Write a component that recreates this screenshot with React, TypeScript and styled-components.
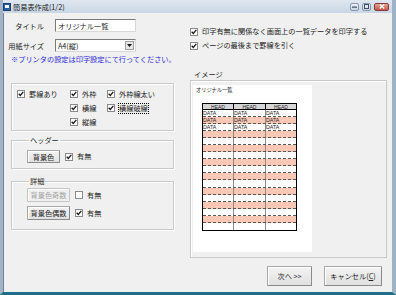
import React from 'react';
import styled, { createGlobalStyle } from 'styled-components';

const Global = createGlobalStyle`
  html, body { margin: 0; padding: 0; background: #f0f0f0; }
  body {
    width: 396px; height: 295px; overflow: hidden;
    font-family: "Noto Sans CJK JP", "Noto Sans", sans-serif;
    font-size: 7.2px; color: #1c1c1c;
  }
  * { box-sizing: border-box; }
`;

const Window = styled.div`
  width: 396px;
  height: 295px;
  display: flex;
  flex-direction: column;
  background: #f0f0f0;
  border-left: 3px solid #a4b4c6;
  border-right: 4px solid #9fb3c6;
  border-bottom: 3px solid #1f6f8b;
  box-shadow: inset 1px 0 0 #6f8297;
`;

const TitleBar = styled.div`
  height: 13px;
  display: flex;
  align-items: center;
  padding: 0 3px 0 0;
  background: linear-gradient(#dfe7f0, #c9d6e4);
`;

const AppIcon = styled.span`
  width: 8px; height: 8px;
  margin-right: 2px;
  background: #2a5fa8;
  border: 1px solid #1b3f74;
  display: flex; align-items: center; justify-content: center;
  &::after { content: ""; width: 4px; height: 3px; background: #fff; }
`;

const TitleText = styled.span`
  flex: 1;
  font-size: 7.2px;
  color: #222;
  white-space: nowrap;
`;

const Controls = styled.div`
  display: flex;
  gap: 3px;
  align-items: center;
`;

const CtlButton = styled.span<{ $close?: boolean }>`
  width: ${p => (p.$close ? 15 : 9)}px;
  height: 8px;
  border-radius: 2px;
  border: 1px solid ${p => (p.$close ? '#8a3a3a' : '#8497ad')};
  background: ${p => (p.$close ? 'linear-gradient(#e6a296, #c7564a)' : 'linear-gradient(#f0f4f8, #c9d5e2)')};
  display: flex; align-items: center; justify-content: center;
`;

const Body = styled.div`
  flex: 1;
  display: flex;
  flex-direction: column;
  padding: 6px 5px 0 8px;
`;

const Main = styled.div`
  display: flex;
  gap: 16px;
`;

const LeftCol = styled.div`
  width: 163px;
  display: flex;
  flex-direction: column;
`;

const RightCol = styled.div`
  width: 197px;
  display: flex;
  flex-direction: column;
`;

const FieldRow = styled.div<{ $mt?: number }>`
  display: grid;
  grid-template-columns: 44px 81px;
  align-items: center;
  margin-top: ${p => p.$mt ?? 0}px;
`;

const FieldLabel = styled.span`
  justify-self: end;
  white-space: nowrap;
  margin-right: 11px;
`;

const TextInput = styled.div`
  grid-column: 2;
  height: 13px;
  background: #fff;
  border: 1px solid #7a7a7a;
  border-right-color: #d8d8d8;
  border-bottom-color: #d8d8d8;
  display: flex; align-items: center;
  padding-left: 2px;
  white-space: nowrap;
`;

const SelectBox = styled(TextInput)`
  justify-content: space-between;
  padding-right: 1px;
`;

const DropBtn = styled.span`
  width: 9px; height: 9px;
  background: #e6e6e6;
  border: 1px solid #a0a0a0;
  display: flex; align-items: center; justify-content: center;
`;

const Note = styled.div`
  margin-top: 3px;
  line-height: 9px;
  color: #2b2bd6;
  white-space: nowrap;
`;

const Group = styled.div`
  margin-top: 19px;
  height: 48px;
  border: 1px solid #c9c9c9;
  box-shadow: inset 1px 1px 0 #fff, 1px 1px 0 #fff;
  padding: 3px 0 0 5px;
  display: grid;
  grid-template-columns: 53px 37px auto;
  grid-auto-rows: 14px;
  align-items: center;
`;

const Fieldset = styled.fieldset<{ $mt: number; $pt: number; $pb: number }>`
  margin: ${p => p.$mt}px 0 0 0;
  padding: ${p => p.$pt}px 0 ${p => p.$pb}px 15px;
  border: 1px solid #c9c9c9;
  box-shadow: inset 1px 1px 0 #fff, 1px 1px 0 #fff;
  min-inline-size: 0;
  display: flex;
  flex-direction: column;
  gap: 4px;
`;

const Legend = styled.legend`
  margin-left: 2px;
  padding: 0 1px;
  line-height: 9px;
  font-size: 7.2px;
`;

const BtnRow = styled.div`
  display: flex;
  align-items: center;
  gap: 5px;
`;

const WinButton = styled.button<{ $w: number; $h: number }>`
  width: ${p => p.$w}px;
  height: ${p => p.$h}px;
  padding: 0;
  font-family: inherit;
  font-size: 7.2px;
  color: #1c1c1c;
  background: linear-gradient(#f4f4f4, #e0e0e0);
  border: 1px solid #a8a8a8;
  border-right-color: #8a8a8a;
  border-bottom-color: #8a8a8a;
  border-radius: 1px;
  box-shadow: inset 1px 1px 0 #fff;
  white-space: nowrap;
  &:disabled { color: #a3a3a3; border-color: #c4c4c4; background: #f0f0f0; }
  u { text-decoration: underline; text-underline-offset: 1px; }
`;

const CheckWrap = styled.label<{ $focus?: boolean }>`
  display: inline-flex;
  align-items: center;
  gap: 4px;
  white-space: nowrap;
  line-height: 9px;
  span.txt {
    outline: ${p => (p.$focus ? '1px dotted #000' : 'none')};
    outline-offset: 0px;
  }
`;

const Box = styled.span`
  width: 8px; height: 8px;
  flex: none;
  background: #fff;
  border: 1px solid #8b8b8b;
  display: flex; align-items: center; justify-content: center;
`;

const Check: React.FC<{ checked?: boolean; label: string; focus?: boolean }> = ({ checked = true, label, focus }) => (
  <CheckWrap $focus={focus}>
    <Box>
      {checked && (
        <svg width="6" height="6" viewBox="0 0 6 6">
          <path d="M0.7 2.8 L2.3 4.5 L5.3 0.9" fill="none" stroke="#1a1a1a" strokeWidth="1.3" />
        </svg>
      )}
    </Box>
    <span className="txt">{label}</span>
  </CheckWrap>
);

const OptRow = styled.div<{ $mt: number }>`
  margin-top: ${p => p.$mt}px;
  height: 9px;
  display: flex;
  align-items: center;
  white-space: nowrap;
`;

const ImageLabel = styled.div`
  margin-top: 20px;
  height: 9px;
  line-height: 9px;
  padding-left: 4px;
`;

const ImageFrame = styled.div`
  margin-top: 1px;
  height: 178px;
  border: 1px solid #c9c9c9;
  box-shadow: inset 1px 1px 0 #fff;
  padding: 4px 0 0 2px;
`;

const Paper = styled.div`
  width: 119px;
  height: 167px;
  background: #fff;
  padding: 2px 0 0 3px;
`;

const PaperTitle = styled.div`
  font-size: 5.2px;
  line-height: 6px;
  white-space: nowrap;
`;

const Table = styled.div`
  margin: 10px 0 0 6px;
  width: 95px;
  border: 1px solid #000;
  display: flex;
  flex-direction: column;
`;

const HeadRow = styled.div`
  display: grid;
  grid-template-columns: 31px 32px 30px;
  height: 6px;
  background: #d6d6d6;
  border-bottom: 1px solid #000;
`;

const HeadCell = styled.div<{ $last?: boolean }>`
  font-family: "Liberation Sans", Arial, sans-serif;
  font-size: 5px;
  line-height: 6px;
  text-align: center;
  border-right: ${p => (p.$last ? 'none' : '1px solid #000')};
  overflow: hidden;
`;

const DataRow = styled.div<{ $pink: boolean; $last: boolean }>`
  display: grid;
  grid-template-columns: 31px 32px 30px;
  height: 7.05px;
  background: ${p => (p.$pink ? '#fbc8b6' : '#fff')};
  border-bottom: ${p => (p.$last ? 'none' : '1px dashed #555')};
`;

const DataCell = styled.div<{ $last?: boolean }>`
  font-family: "Liberation Sans", Arial, sans-serif;
  font-size: 5.3px;
  line-height: 6px;
  border-right: ${p => (p.$last ? 'none' : '1.5px solid #8c8c8c')};
  overflow: hidden;
  white-space: nowrap;
`;

const Footer = styled.div`
  display: flex;
  justify-content: flex-end;
  gap: 12px;
  margin-top: 8px;
  padding-right: 5px;
`;

const rows = Array.from({ length: 17 }, (_, i) => i);

export default function App() {
  return (
    <>
      <Global />
      <Window>
        <TitleBar>
          <AppIcon />
          <TitleText>簡易表作成(1/2)</TitleText>
          <Controls>
            <CtlButton>
              <svg width="5" height="3" viewBox="0 0 5 3"><rect x="0" y="1.5" width="5" height="1.2" fill="#3d4f63" /></svg>
            </CtlButton>
            <CtlButton>
              <svg width="5" height="5" viewBox="0 0 5 5"><rect x="0.5" y="0.5" width="4" height="4" fill="none" stroke="#3d4f63" strokeWidth="1" /></svg>
            </CtlButton>
            <CtlButton $close>
              <svg width="6" height="5" viewBox="0 0 6 5"><path d="M0.8 0.5 L5.2 4.5 M5.2 0.5 L0.8 4.5" stroke="#fff" strokeWidth="1.2" /></svg>
            </CtlButton>
          </Controls>
        </TitleBar>
        <Body>
          <Main>
            <LeftCol>
              <FieldRow>
                <FieldLabel>タイトル</FieldLabel>
                <TextInput>オリジナル一覧</TextInput>
              </FieldRow>
              <FieldRow $mt={7}>
                <FieldLabel>用紙サイズ</FieldLabel>
                <SelectBox>
                  <span>A4(縦)</span>
                  <DropBtn>
                    <svg width="5" height="3" viewBox="0 0 5 3"><path d="M0 0 L5 0 L2.5 3 Z" fill="#111" /></svg>
                  </DropBtn>
                </SelectBox>
              </FieldRow>
              <Note>※プリンタの設定は印字設定にて行ってください。</Note>
              <Group>
                <Check label="罫線あり" />
                <Check label="外枠" />
                <Check label="外枠線太い" />
                <span />
                <Check label="横線" />
                <Check label="横線破線" focus />
                <span />
                <Check label="縦線" />
              </Group>
              <Fieldset $mt={5} $pt={5} $pb={5}>
                <Legend>ヘッダー</Legend>
                <BtnRow>
                  <WinButton $w={33} $h={13}>背景色</WinButton>
                  <Check label="有無" />
                </BtnRow>
              </Fieldset>
              <Fieldset $mt={8} $pt={2} $pb={9}>
                <Legend>詳細</Legend>
                <BtnRow>
                  <WinButton $w={43} $h={14} disabled>背景色奇数</WinButton>
                  <Check label="有無" checked={false} />
                </BtnRow>
                <BtnRow>
                  <WinButton $w={43} $h={14}>背景色偶数</WinButton>
                  <Check label="有無" />
                </BtnRow>
              </Fieldset>
            </LeftCol>
            <RightCol>
              <OptRow $mt={8}>
                <Check label="印字有無に関係なく画面上の一覧データを印字する" />
              </OptRow>
              <OptRow $mt={5}>
                <Check label="ページの最後まで罫線を引く" />
              </OptRow>
              <ImageLabel>イメージ</ImageLabel>
              <ImageFrame>
                <Paper>
                  <PaperTitle>オリジナル一覧</PaperTitle>
                  <Table>
                    <HeadRow>
                      <HeadCell>HEAD</HeadCell>
                      <HeadCell>HEAD</HeadCell>
                      <HeadCell $last>HEAD</HeadCell>
                    </HeadRow>
                    {rows.map(i => (
                      <DataRow key={i} $pink={i % 2 === 1} $last={i === rows.length - 1}>
                        <DataCell>{i < 3 ? 'DATA' : ''}</DataCell>
                        <DataCell>{i < 3 ? 'DATA' : ''}</DataCell>
                        <DataCell $last>{i < 3 ? 'DATA' : ''}</DataCell>
                      </DataRow>
                    ))}
                  </Table>
                </Paper>
              </ImageFrame>
            </RightCol>
          </Main>
          <Footer>
            <WinButton $w={45} $h={20}>次へ &gt;&gt;</WinButton>
            <WinButton $w={58} $h={20}>キャンセル(<u>C</u>)</WinButton>
          </Footer>
        </Body>
      </Window>
    </>
  );
}
